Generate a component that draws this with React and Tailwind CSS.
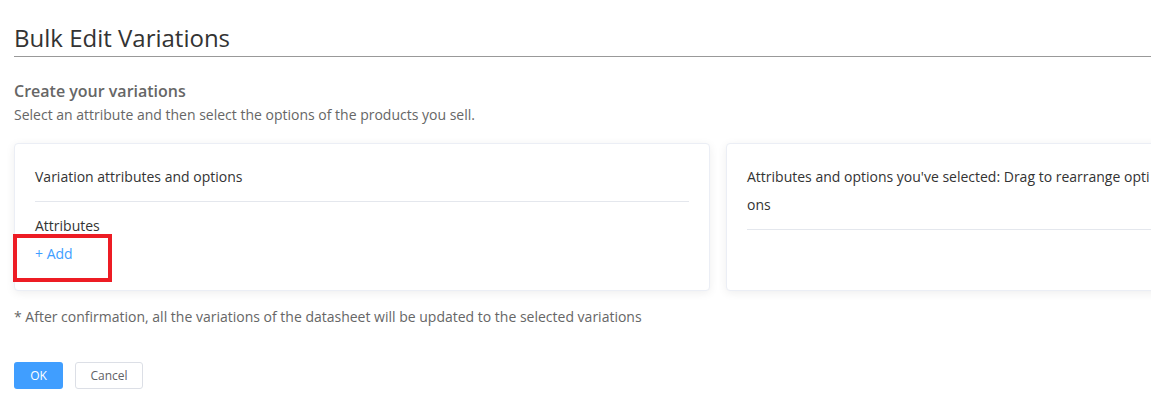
export default function App() {
  return (
    <div className="w-[1151px] h-[410px] overflow-hidden bg-white font-['Open_Sans',sans-serif] text-[#606266]">
      <div className="pl-[14px] pt-[21px] w-[1300px]">
        <h1 className="text-[24px] leading-[34px] text-[#333] pb-[1px]">Bulk Edit Variations</h1>
        <div className="h-px bg-[#999] w-[1200px]" />

        <h2 className="mt-[22px] text-[16px] leading-[24px] font-semibold text-[#666]">Create your variations</h2>
        <p className="mt-[2px] text-[14px] leading-[20px] text-[#666]">
          Select an attribute and then select the options of the products you sell.
        </p>

        <div className="mt-[18px] flex gap-[16px] items-stretch">
          <div className="relative w-[696px] shrink-0 bg-white border border-[#ebeef5] rounded-[4px] shadow-[0_2px_10px_rgba(0,0,0,0.07)] pt-[19px] px-[20px] pb-[22px]">
            <div className="text-[14px] leading-[28px] text-[#333]">Variation attributes and options</div>
            <div className="mt-[10px] h-px bg-[#e4e7ed]" />
            <div className="mt-[10px] text-[14px] leading-[28px] text-[#333]">Attributes</div>
            <div className="text-[14px] leading-[28px] text-[#409eff] cursor-pointer">+ Add</div>
            <div className="absolute left-[-2px] top-[90px] w-[99px] h-[48px] border-[4px] border-[#ed1c24]" />
          </div>

          <div className="w-[696px] shrink-0 bg-white border border-[#ebeef5] rounded-[4px] shadow-[0_2px_10px_rgba(0,0,0,0.07)] pt-[19px] px-[20px] pb-[22px]">
            <div className="w-[405px] text-[14px] leading-[28px] text-[#333] break-all">
              Attributes and options you've selected: Drag to rearrange options
            </div>
            <div className="mt-[10px] h-px bg-[#e4e7ed]" />
          </div>
        </div>

        <p className="mt-[16px] text-[14px] leading-[20px] text-[#666]">
          * After confirmation, all the variations of the datasheet will be updated to the selected variations
        </p>

        <div className="mt-[35px] flex gap-[12px]">
          <button className="w-[49px] h-[27px] rounded-[3px] bg-[#409eff] text-white text-[12px]">OK</button>
          <button className="w-[68px] h-[27px] rounded-[3px] border border-[#dcdfe6] bg-white text-[#606266] text-[12px]">Cancel</button>
        </div>
      </div>
    </div>
  );
}
